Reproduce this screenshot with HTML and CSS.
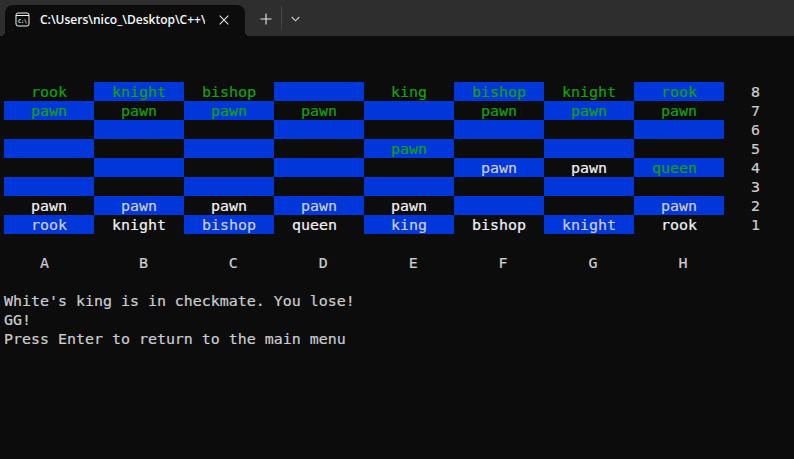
FILE: index.html
```html
<!DOCTYPE html>
<html lang="en">
<head>
<meta charset="utf-8">
<title>C:\Users\nico_\Desktop\C++\</title>
<link rel="stylesheet" href="styles.css">
</head>
<body>
<header class="tabbar">
  <div class="tab">
    <svg class="tab-icon" width="15" height="15" viewBox="0 0 15 15" fill="none" stroke="#f2f2f2" stroke-width="1"><rect x="1" y="1" width="13" height="13" rx="2"/><path d="M1 3.5h13"/><text class="icon-text" x="7.5" y="10.6" text-anchor="middle">C:\</text></svg>
    <span class="tab-title">C:\Users\nico_\Desktop\C++\</span>
    <svg class="tab-close" width="10" height="10" viewBox="0 0 10 10" stroke="#e6e6e6" stroke-width="1.1"><path d="M.7.7l8.6 8.6M9.3.7L.7 9.3"/></svg>
  </div>
  <svg class="new-tab" width="12" height="12" viewBox="0 0 12 12" stroke="#e6e6e6" stroke-width="1.1"><path d="M6 .5v11M.5 6h11"/></svg>
  <span class="divider"></span>
  <svg class="dropdown" width="9" height="6" viewBox="0 0 9 6" fill="none" stroke="#d0d0d0" stroke-width="1.1"><path d="M.7 1l3.8 3.8L8.3 1"/></svg>
</header>
<main class="terminal">
  <div class="row"><span class="cell g">   rook   </span><span class="cell b g">  knight  </span><span class="cell g">  bishop  </span><span class="cell b">          </span><span class="cell g">   king   </span><span class="cell b g">  bishop  </span><span class="cell g">  knight  </span><span class="cell b g">   rook   </span><span class="rank">   8</span></div>
  <div class="row"><span class="cell b g">   pawn   </span><span class="cell g">   pawn   </span><span class="cell b g">   pawn   </span><span class="cell g">   pawn   </span><span class="cell b">          </span><span class="cell g">   pawn   </span><span class="cell b g">   pawn   </span><span class="cell g">   pawn   </span><span class="rank">   7</span></div>
  <div class="row"><span class="cell">          </span><span class="cell b">          </span><span class="cell">          </span><span class="cell b">          </span><span class="cell">          </span><span class="cell b">          </span><span class="cell">          </span><span class="cell b">          </span><span class="rank">   6</span></div>
  <div class="row"><span class="cell b">          </span><span class="cell">          </span><span class="cell b">          </span><span class="cell">          </span><span class="cell b g">   pawn   </span><span class="cell">          </span><span class="cell b">          </span><span class="cell">          </span><span class="rank">   5</span></div>
  <div class="row"><span class="cell">          </span><span class="cell b">          </span><span class="cell">          </span><span class="cell b">          </span><span class="cell">          </span><span class="cell b w">   pawn   </span><span class="cell w">   pawn   </span><span class="cell b g">  queen   </span><span class="rank">   4</span></div>
  <div class="row"><span class="cell b">          </span><span class="cell">          </span><span class="cell b">          </span><span class="cell">          </span><span class="cell b">          </span><span class="cell">          </span><span class="cell b">          </span><span class="cell">          </span><span class="rank">   3</span></div>
  <div class="row"><span class="cell w">   pawn   </span><span class="cell b w">   pawn   </span><span class="cell w">   pawn   </span><span class="cell b w">   pawn   </span><span class="cell w">   pawn   </span><span class="cell b">          </span><span class="cell">          </span><span class="cell b w">   pawn   </span><span class="rank">   2</span></div>
  <div class="row"><span class="cell b w">   rook   </span><span class="cell w">  knight  </span><span class="cell b w">  bishop  </span><span class="cell w">  queen   </span><span class="cell b w">   king   </span><span class="cell w">  bishop  </span><span class="cell b w">  knight  </span><span class="cell w">   rook   </span><span class="rank">   1</span></div>
  <div class="row"> </div>
  <div class="row">    A          B         C         D         E         F         G         H</div>
  <div class="row"> </div>
  <div class="row">White's king is in checkmate. You lose!</div>
  <div class="row">GG!</div>
  <div class="row">Press Enter to return to the main menu</div>
</main>
</body>
</html>
```
FILE: styles.css
```css
html, body {
  margin: 0;
  height: 100%;
  background: #0c0c0c;
}
body {
  display: flex;
  flex-direction: column;
  overflow: hidden;
}
.tabbar {
  display: flex;
  align-items: center;
  height: 36px;
  flex: none;
  background: #2e2e2e;
  padding-left: 5px;
  box-sizing: border-box;
}
.tab {
  position: relative;
  display: flex;
  align-items: center;
  align-self: flex-end;
  height: 31px;
  width: 240px;
  box-sizing: border-box;
  padding: 0 16px 2px 10px;
  background: #0c0c0c;
  border-radius: 8px 8px 0 0;
}
.tab::before,
.tab::after {
  content: "";
  position: absolute;
  bottom: 0;
  width: 5px;
  height: 5px;
}
.tab::before {
  right: 100%;
  background: radial-gradient(circle at 0 0, transparent 5px, #0c0c0c 5.5px);
}
.tab::after {
  left: 100%;
  background: radial-gradient(circle at 100% 0, transparent 5px, #0c0c0c 5.5px);
}
.tab-icon { flex: none; }
.icon-text {
  font: 700 5px "DejaVu Sans Mono", monospace;
  fill: #f2f2f2;
  stroke: none;
}
.tab-title {
  flex: 1;
  margin-left: 10px;
  font: 600 12px "Open Sans", sans-serif;
  color: #f8f8f8;
  white-space: nowrap;
  overflow: hidden;
}
.tab-close { flex: none; margin-left: 14px; }
.new-tab { margin-left: 15px; position: relative; top: 1px; }
.divider {
  width: 1px;
  height: 24px;
  margin-left: 9px;
  background: #454545;
}
.dropdown { margin-left: 9px; position: relative; top: 1px; }
.terminal {
  flex: 1;
  padding: 46px 0 0 4px;
  background: #0c0c0c;
  color: #cccccc;
  font: 14.95px/21px "DejaVu Sans Mono", monospace;
  -webkit-text-stroke: 0.2px currentColor;
}
.row {
  display: flex;
  height: 19px;
  white-space: pre;
}
.cell {
  width: 90px;
  height: 19px;
  flex: none;
  overflow: hidden;
}
.b { background: #0037da; }
.g { color: #13a10e; }
.w { color: #f2f2f2; }
.b.w { color: #cccccc; }
```
